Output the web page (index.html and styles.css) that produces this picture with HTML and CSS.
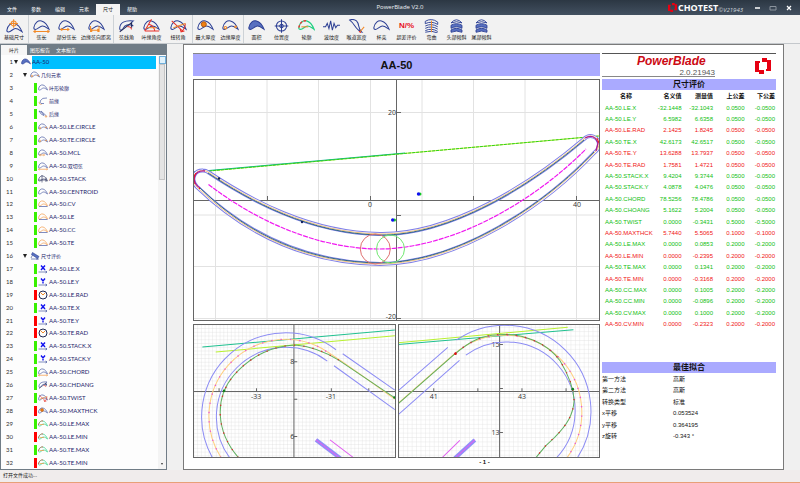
FILE: index.html
```html
<!DOCTYPE html>
<html lang="zh-CN">
<head>
<meta charset="utf-8">
<meta name="viewport" content="width=device-width, initial-scale=1">
<title>PowerBlade V2.0</title>
<link rel="stylesheet" href="styles.css">
</head>
<body>
<svg class="defs" aria-hidden="true">
  <defs>
    <path id="b" d="M1 10C2 4 6 1 10 2C14 3 17 7 19 12C16 10 14 8 11 8C8 8 6 12 3 12C1 12 1 11 1 10Z"/>
    <path id="foil" d="M208 172C250 200 310 233 380 234C450 235 530 185 584 139C590 133 599 137 599 145Q599 149 594 153C545 205 460 263 380 264C310 263 250 238 197 187C190 180 194 170 203 170.500Q206 170.500 208 172Z"/>
    <symbol id="i-blade" viewBox="0 0 20 16"><use href="#b" class="ln"/></symbol>
    <symbol id="i-fill" viewBox="0 0 20 16"><use href="#b" class="ln solid"/></symbol>
    <symbol id="i-base" viewBox="0 0 20 16"><use href="#b" class="ln" transform="translate(0 3)"/><circle cx="9" cy="5" r="3" class="or"/><path d="M9 0V10M4 5H14" class="or"/></symbol>
    <symbol id="i-chord" viewBox="0 0 20 16"><use href="#b" class="ln"/><path d="M1 14.500H19M3 13L1 14.500L3 16M17 13L19 14.500L17 16" class="or"/></symbol>
    <symbol id="i-part" viewBox="0 0 20 16"><use href="#b" class="ln"/><path d="M3 12H13M5 10.500L3 12L5 13.500M11 10.500L13 12L11 13.500" class="or"/></symbol>
    <symbol id="i-dist" viewBox="0 0 20 16"><use href="#b" class="ln"/><path d="M3 8V15M13 8V15M3 13H13M5 11.500L3 13L5 14.500M11 11.500L13 13L11 14.500" class="or"/></symbol>
    <symbol id="i-ang" viewBox="0 0 20 16"><path d="M2 11C2 4 8 1 18 2C14 5 15 6 18 8C12 5 8 7 6 11C4 14 2 13 2 11Z" class="ln"/><path d="M2 15L16 4M16 4V10" class="dk"/><path d="M11 9Q15 8 16 12" class="rd"/></symbol>
    <symbol id="i-edge" viewBox="0 0 20 16"><use href="#b" class="ln"/><path d="M2 14H19M2 14L10 0M7 6Q13 8 14 14" class="rd"/><path d="M5 10H16" class="or"/></symbol>
    <symbol id="i-twist" viewBox="0 0 20 16"><use href="#b" class="ln"/><path d="M2 2L15 14M18 5Q18 11 13 15M12 12L13 15L17 14" class="rd"/><path d="M4 10L18 5" class="or"/></symbol>
    <symbol id="i-max" viewBox="0 0 20 16"><use href="#b" class="ln"/><circle cx="8" cy="6" r="3" fill="#f08010" stroke="#a85010"/></symbol>
    <symbol id="i-thk" viewBox="0 0 20 16"><use href="#b" class="ln"/><circle cx="4" cy="10" r="1.500" class="or"/><circle cx="16" cy="9" r="1" class="or"/></symbol>
    <symbol id="i-pos" viewBox="0 0 20 16"><circle cx="10" cy="8" r="6" class="ln"/><circle cx="10" cy="8" r="2" class="ln"/><path d="M10 0V16M2 8H18" class="ln"/></symbol>
    <symbol id="i-prof" viewBox="0 0 20 16"><use href="#b" fill="none" stroke="#20d080" stroke-width="1.400"/><path d="M1 10C2 4 6 1 10 2" stroke="#f03030" stroke-width="1.600" fill="none" stroke-dasharray="3 2"/><path d="M4 9H12" class="or"/></symbol>
    <symbol id="i-wave" viewBox="0 0 20 16"><path d="M0 9H3L5 5L7 11L9 2L11 13L13 5L15 10L17 7H20" class="ln"/></symbol>
    <symbol id="i-throat" viewBox="0 0 20 16"><path d="M2 1C4 0 7 0 10 2C14 6 11 10 16 15C9 13 8 5 2 1Z" class="ln"/><path d="M14 15L19 9" class="or"/><path d="M13 14L15 16" class="rd"/></symbol>
    <symbol id="i-bend" viewBox="0 0 20 18"><path d="M2 3Q10-2 18 4V7Q10 2 2 6ZM2 9Q10 5 18 10M2 12Q10 8 18 13M2 15Q10 11 18 16M2 17Q10 14 18 18" class="ln"/><path d="M10 2V17" class="or"/></symbol>
    <symbol id="i-tilt" viewBox="0 0 20 18"><path d="M3 5Q10-3 17 5Q10 2 3 5Z" class="ln"/><path d="M3 8Q10 4 17 8V12Q10 8 3 12ZM3 14Q10 10 17 14V17Q10 14 3 17Z" class="ln solid"/></symbol>
    <symbol id="i-front" viewBox="0 0 20 16"><path d="M18 2Q8 1 5 7Q3 11 6 13H12" class="ln"/><path d="M2 10Q2 15 7 15" class="or"/></symbol>
    <symbol id="i-rear" viewBox="0 0 20 16"><path d="M2 2Q9 3 12 11Q6 10 2 2M6 2L17 12" class="ln"/><circle cx="16" cy="13" r="1.500" class="or"/></symbol>
    <symbol id="i-arc" viewBox="0 0 20 16"><use href="#b" class="or"/><path d="M2 13H19" class="ln"/></symbol>
    <symbol id="i-stack" viewBox="0 0 20 16"><use href="#b" class="dk"/><path d="M8 0V15M1 10H17M16 5V14" class="dk"/></symbol>
    <symbol id="i-eval" viewBox="0 0 20 16"><path d="M5 1L18 9L15 13L3 5Z" class="ln solid"/><path d="M2 12L5 6M2 14H18M14 12V16" class="ln"/></symbol>
    <symbol id="i-x" viewBox="0 0 20 16"><path d="M6 1L14 10M14 1L6 10" stroke="#1010f0" stroke-width="2.800"/><path d="M1 14H18M15 12L18 14L15 16" class="ln"/></symbol>
    <symbol id="i-y" viewBox="0 0 20 16"><path d="M6 1L10 6L14 1M10 5V11" fill="none" stroke="#1010f0" stroke-width="2.800"/><path d="M1 14H18M15 12L18 14L15 16" class="ln"/></symbol>
    <symbol id="i-rad" viewBox="0 0 20 18"><circle cx="10" cy="9" r="8" class="dk" style="stroke-width:2"/><path d="M5 4L10 9L14 5" class="or" style="stroke-width:2"/></symbol>
    <symbol id="i-logo" viewBox="0 0 16 16"><path d="M5 3H0V14H4V16H9V12H4V5H5ZM7 0V4H12V11H11V13H16V2H12V0Z" fill="#e60012"/></symbol>
    <pattern id="g1" width="11.200" height="11.200" x="2.800" y="9.800" patternUnits="userSpaceOnUse"><path d="M0 0H11.200M0 0V11.200" class="minor"/></pattern>
    <pattern id="g2" width="13.200" height="13.200" x="10.200" y="2" patternUnits="userSpaceOnUse"><path d="M0 0H13.200M0 0V13.200" class="minor"/></pattern>
  </defs>
</svg>

<header class="titlebar">
  <nav class="menu">
    <button>文件</button><button>参数</button><button>编辑</button><button>元素</button><button class="on">尺寸</button><button>帮助</button>
  </nav>
  <h1>PowerBlade V2.0</h1>
  <div class="brand">
    <svg class="logo"><use href="#i-logo"/></svg><b>CHOTEST</b><i>©V21943</i>
    <button aria-label="最小化"><svg viewBox="0 0 8 8"><path d="M2 4H7" stroke="#fff" stroke-width="1.500"/></svg></button>
    <button aria-label="最大化"><svg viewBox="0 0 8 8"><path d="M1 2.500H7V6H1Z" fill="none" stroke="#8a939c"/></svg></button>
    <button aria-label="关闭"><svg viewBox="0 0 8 8"><path d="M2 2L6 6M6 2L2 6" stroke="#fff" stroke-width="1.200"/></svg></button>
  </div>
</header>

<div class="ribbon">
  <div class="group"><button class="mid"><svg><use href="#i-base"/></svg>基础尺寸</button></div>
  <div class="group">
    <button><svg><use href="#i-chord"/></svg>弦长</button>
    <button><svg><use href="#i-part"/></svg>部分弦长</button>
    <button class="wide"><svg><use href="#i-dist"/></svg>边缘弦向距离</button>
  </div>
  <div class="group">
    <button><svg><use href="#i-ang"/></svg>弦线角</button>
    <button><svg><use href="#i-edge"/></svg>叶缘角度</button>
    <button class="mid"><svg><use href="#i-twist"/></svg>扭转角</button>
  </div>
  <div class="group">
    <button><svg><use href="#i-max"/></svg>最大厚度</button>
    <button><svg><use href="#i-thk"/></svg>边缘厚度</button>
  </div>
  <div class="group">
    <button><svg><use href="#i-fill"/></svg>面积</button>
    <button><svg><use href="#i-pos"/></svg>位置度</button>
    <button><svg><use href="#i-prof"/></svg>轮廓</button>
    <button><svg><use href="#i-wave"/></svg>波纹度</button>
    <button><svg><use href="#i-throat"/></svg>喉道宽度</button>
    <button><svg><use href="#i-blade"/></svg>杯突</button>
    <button><b class="pct">N/%</b>超差评价</button>
    <button><svg><use href="#i-bend"/></svg>弯曲</button>
    <button><svg><use href="#i-tilt"/></svg>头部倾斜</button>
    <button><svg><use href="#i-tilt"/></svg>尾部倾斜</button>
  </div>
</div>

<div class="work">
  <aside class="side">
    <nav class="tabs"><button class="on">叶片</button><button>图形报告</button><button>文本报告</button></nav>
    <div class="body">
      <ol class="tree">
        <li class="l1 sel"><span class="no">1</span><span class="tw"></span><svg><use href="#i-fill"/></svg><span class="tx">AA-50</span></li>
        <li class="l2"><span class="no">2</span><span class="tw"></span><svg><use href="#i-thk"/></svg><span class="tx cj">几何元素</span></li>
        <li><span class="no">3</span><span class="st"></span><svg><use href="#i-blade"/></svg><span class="tx cj">叶形轮廓</span></li>
        <li><span class="no">4</span><span class="st"></span><svg><use href="#i-front"/></svg><span class="tx cj">前缘</span></li>
        <li><span class="no">5</span><span class="st"></span><svg><use href="#i-rear"/></svg><span class="tx cj">后缘</span></li>
        <li><span class="no">6</span><span class="st"></span><svg><use href="#i-thk"/></svg><span class="tx">AA-50.LE.CIRCLE</span></li>
        <li><span class="no">7</span><span class="st"></span><svg><use href="#i-thk"/></svg><span class="tx">AA-50.TE.CIRCLE</span></li>
        <li><span class="no">8</span><span class="st"></span><svg><use href="#i-part"/></svg><span class="tx">AA-50.MCL</span></li>
        <li><span class="no">9</span><span class="st"></span><svg><use href="#i-chord"/></svg><span class="tx">AA-50.<span class="cj">双切弦</span></span></li>
        <li><span class="no">10</span><span class="st"></span><svg><use href="#i-stack"/></svg><span class="tx">AA-50.STACK</span></li>
        <li><span class="no">11</span><span class="st"></span><svg><use href="#i-blade"/></svg><span class="tx">AA-50.CENTROID</span></li>
        <li><span class="no">12</span><span class="st"></span><svg><use href="#i-arc"/></svg><span class="tx">AA-50.CV</span></li>
        <li><span class="no">13</span><span class="st"></span><svg><use href="#i-arc"/></svg><span class="tx">AA-50.LE</span></li>
        <li><span class="no">14</span><span class="st"></span><svg><use href="#i-arc"/></svg><span class="tx">AA-50.CC</span></li>
        <li><span class="no">15</span><span class="st"></span><svg><use href="#i-arc"/></svg><span class="tx">AA-50.TE</span></li>
        <li class="l2"><span class="no">16</span><span class="tw"></span><svg><use href="#i-eval"/></svg><span class="tx cj">尺寸评价</span></li>
        <li><span class="no">17</span><span class="st"></span><svg><use href="#i-x"/></svg><span class="tx">AA-50.LE.X</span></li>
        <li><span class="no">18</span><span class="st"></span><svg><use href="#i-y"/></svg><span class="tx">AA-50.LE.Y</span></li>
        <li class="bad"><span class="no">19</span><span class="st"></span><svg><use href="#i-rad"/></svg><span class="tx">AA-50.LE.RAD</span></li>
        <li><span class="no">20</span><span class="st"></span><svg><use href="#i-x"/></svg><span class="tx">AA-50.TE.X</span></li>
        <li class="bad"><span class="no">21</span><span class="st"></span><svg><use href="#i-y"/></svg><span class="tx">AA-50.TE.Y</span></li>
        <li class="bad"><span class="no">22</span><span class="st"></span><svg><use href="#i-rad"/></svg><span class="tx">AA-50.TE.RAD</span></li>
        <li><span class="no">23</span><span class="st"></span><svg><use href="#i-x"/></svg><span class="tx">AA-50.STACK.X</span></li>
        <li><span class="no">24</span><span class="st"></span><svg><use href="#i-y"/></svg><span class="tx">AA-50.STACK.Y</span></li>
        <li><span class="no">25</span><span class="st"></span><svg><use href="#i-chord"/></svg><span class="tx">AA-50.CHORD</span></li>
        <li><span class="no">26</span><span class="st"></span><svg><use href="#i-ang"/></svg><span class="tx">AA-50.CHDANG</span></li>
        <li><span class="no">27</span><span class="st"></span><svg><use href="#i-twist"/></svg><span class="tx">AA-50.TWIST</span></li>
        <li class="bad"><span class="no">28</span><span class="st"></span><svg><use href="#i-max"/></svg><span class="tx">AA-50.MAXTHCK</span></li>
        <li><span class="no">29</span><span class="st"></span><svg><use href="#i-prof"/></svg><span class="tx">AA-50.LE.MAX</span></li>
        <li class="bad"><span class="no">30</span><span class="st"></span><svg><use href="#i-prof"/></svg><span class="tx">AA-50.LE.MIN</span></li>
        <li><span class="no">31</span><span class="st"></span><svg><use href="#i-prof"/></svg><span class="tx">AA-50.TE.MAX</span></li>
        <li class="bad"><span class="no">32</span><span class="st"></span><svg><use href="#i-prof"/></svg><span class="tx">AA-50.TE.MIN</span></li>
      </ol>
      <div class="scroll"><span class="up"></span><span class="thumb"></span><span class="down"></span></div>
    </div>
  </aside>

  <main class="page">
    <section class="plots">
      <h2>AA-50</h2>
      <svg class="chart" viewBox="193 79 407 242">
        <path class="major" d="M215.500 79V321M267 79V321M318.500 79V321M370.500 79V321M422 79V321M473.500 79V321M525 79V321M576.500 79V321M193 112.500H600M193 163.500H600M193 215H600M193 266.500H600M193 318.500H600"/>
        <path class="axis" d="M193 200.500H600M396.500 79V321M267.500 196V200M370.500 196V200M473.500 196V200M576.500 196V200M397 112.500H401M397 215.500H401M397 318.500H401"/>
        <g class="tick"><text x="396" y="115" text-anchor="end">20</text><text x="396" y="319" text-anchor="end">-20</text><text x="370" y="207" text-anchor="middle">0</text><text x="577" y="207" text-anchor="middle">40</text></g>
        <path d="M193 172L209 171L599 136" stroke="#c8f030" fill="none"/>
        <path d="M193 172L209 170.500L405 153" stroke="#10b890" fill="none"/>
        <path d="M209 171L599 136" stroke="#30d020" fill="none" stroke-dasharray="3 1"/>
        <use href="#foil" class="f-out"/>
        <use href="#foil" class="f-gap"/>
        <use href="#foil" class="f-nom"/>
        <path d="M208 173C250 201 310 234 380 235C450 236 530 186 584 140M594 152C545 204 460 262 380 263C310 262 250 237 199 187" fill="none" stroke="#225f78" stroke-width="0.900"/>
        <path d="M200 188C190 181 194 170 205 171M585 138Q594 133 598 143L596 151" fill="none" stroke="#b01890" stroke-width="1.300"/>
        <path d="M194 184Q193 176 196 173M597 138L599 143M199 188L200 189" fill="none" stroke="#f01818"/>
        <path d="M208.500 184.500C255 220 315 248 378 249C450 249 530 205 586 149" fill="none" stroke="#f018f0" stroke-width="1.200" stroke-dasharray="5 1"/>
        <circle cx="375.300" cy="249" r="15" fill="none" stroke="#e07070"/>
        <circle cx="390.500" cy="249" r="14" fill="none" stroke="#70e870"/>
        <g fill="#10d020"><circle cx="420" cy="194" r="1.500"/><circle cx="394.500" cy="220" r="1.500"/></g>
        <g fill="#1010f0"><circle cx="418.500" cy="194" r="1.700"/><circle cx="392.700" cy="220" r="1.700"/></g>
        <g fill="#102060"><circle cx="302" cy="222" r="1.200"/><circle cx="219" cy="178.500" r="1.200"/></g>
      </svg>
      <div class="pair">
        <svg class="chart zoomed" viewBox="24 20 606 402">
          <rect x="24" y="20" width="606" height="402" fill="url(#g1)"/>
          <path class="axis" d="M24 222H630M326 20V422M102 212V222M214 212V222M438 212V222M550 212V222M326 133H336M326 245H336M326 357H336"/>
          <g class="tick"><text x="327" y="141" text-anchor="end">8</text><text x="327" y="365" text-anchor="end">6</text><text x="213" y="243" text-anchor="middle">-33</text><text x="437" y="243" text-anchor="middle">-31</text></g>
          <path d="M52 89L628 38" class="teal"/><path d="M92 104L628 55" class="lime"/>
          <path d="M83 422A251 251 0 0 1 452 97M135 422A208 208 0 0 1 426 131M472 109L628 218M446 145L628 276" class="tol"/>
          <path d="M108 420A230 230 0 0 1 400 88Q440 108 628 245" class="nom"/>
          <path d="M108 420A230 230 0 0 1 400 88L440 112" class="dots"/>
          <path d="M160 420C90 340 90 240 145 175C200 110 270 85 330 83C390 88 430 110 460 128L628 241" class="mea"/>
          <path d="M160 420C90 340 90 240 145 175C200 110 270 85 330 83C390 88 430 110 460 128" class="dots red"/>
          <circle cx="117" cy="220" r="4" fill="#108020"/><circle cx="627" cy="240" r="4" fill="#108020"/>
          <path d="M392 367L465 422" class="band"/><path d="M392 367L465 422M434 367L507 422" class="mag"/>
        </svg>
        <svg class="chart zoomed" viewBox="22 20 606 402">
          <rect x="22" y="20" width="606" height="402" fill="url(#g2)"/>
          <path class="axis" d="M22 222H628M326 20V422M129 212V222M261 212V222M393 212V222M525 212V222M326 81H336M326 213H336M326 345H336"/>
          <g class="tick"><text x="326" y="89" text-anchor="end">15</text><text x="326" y="353" text-anchor="end">13</text><text x="129" y="243" text-anchor="middle">41</text><text x="393" y="243" text-anchor="middle">43</text></g>
          <path d="M22 81L547 37" class="teal"/><path d="M22 76L530 30" class="lime"/>
          <path d="M197 68A258 258 0 0 1 558 422M225 113A206 206 0 0 1 495 422M22 220L171 90M22 292L206 129" class="tol"/>
          <path d="M22 258L193 107A231 231 0 0 1 528 420" class="nom"/>
          <path d="M193 107A231 231 0 0 1 528 420" class="dots"/>
          <path d="M22 259L193 109C240 70 270 55 320 52C400 45 470 80 507 130C540 185 548 220 549 250C546 290 530 320 490 360C460 385 450 400 435 420" class="mea"/>
          <path d="M193 109C240 70 270 55 320 52C400 45 470 80 507 130C540 185 548 220 549 250C546 290 530 320 490 360C460 385 450 400 435 420" class="dots red"/>
          <circle cx="194" cy="109" r="4" fill="#e01010"/><circle cx="545" cy="215" r="4" fill="#108020"/>
          <path d="M192 422L252 367" class="band"/><path d="M192 422L252 367M152 422L207 368" class="mag"/>
        </svg>
      </div>
    </section>

    <section class="report">
      <div class="head">
        <div class="name"><em>PowerBlade</em><span>2.0.21943</span></div>
        <svg><use href="#i-logo"/></svg>
      </div>
      <h3>尺寸评价</h3>
      <table class="dims">
        <thead><tr><th>名称</th><th>名义值</th><th>测量值</th><th>上公差</th><th>下公差</th></tr></thead>
        <tbody>
          <tr><td>AA-50.LE.X</td><td>-32.1448</td><td>-32.1043</td><td>0.0500</td><td>-0.0500</td></tr>
          <tr><td>AA-50.LE.Y</td><td>6.5982</td><td>6.6358</td><td>0.0500</td><td>-0.0500</td></tr>
          <tr class="bad"><td>AA-50.LE.RAD</td><td>2.1425</td><td>1.8245</td><td>0.0500</td><td>-0.0500</td></tr>
          <tr><td>AA-50.TE.X</td><td>42.6173</td><td>42.6517</td><td>0.0500</td><td>-0.0500</td></tr>
          <tr class="bad"><td>AA-50.TE.Y</td><td>13.6288</td><td>13.7937</td><td>0.0500</td><td>-0.0500</td></tr>
          <tr class="bad"><td>AA-50.TE.RAD</td><td>1.7581</td><td>1.4721</td><td>0.0500</td><td>-0.0500</td></tr>
          <tr><td>AA-50.STACK.X</td><td>9.4204</td><td>9.3744</td><td>0.0500</td><td>-0.0500</td></tr>
          <tr><td>AA-50.STACK.Y</td><td>4.0878</td><td>4.0476</td><td>0.0500</td><td>-0.0500</td></tr>
          <tr><td>AA-50.CHORD</td><td>78.5256</td><td>78.4786</td><td>0.0500</td><td>-0.0500</td></tr>
          <tr><td>AA-50.CHOANG</td><td>5.1622</td><td>5.2004</td><td>0.0500</td><td>-0.0500</td></tr>
          <tr><td>AA-50.TWIST</td><td>0.0000</td><td>-0.3431</td><td>0.5000</td><td>-0.5000</td></tr>
          <tr class="bad"><td>AA-50.MAXTHCK</td><td>5.7440</td><td>5.5065</td><td>0.1000</td><td>-0.1000</td></tr>
          <tr><td>AA-50.LE.MAX</td><td>0.0000</td><td>0.0853</td><td>0.2000</td><td>-0.2000</td></tr>
          <tr class="bad"><td>AA-50.LE.MIN</td><td>0.0000</td><td>-0.2395</td><td>0.2000</td><td>-0.2000</td></tr>
          <tr><td>AA-50.TE.MAX</td><td>0.0000</td><td>0.1341</td><td>0.2000</td><td>-0.2000</td></tr>
          <tr class="bad"><td>AA-50.TE.MIN</td><td>0.0000</td><td>-0.3168</td><td>0.2000</td><td>-0.2000</td></tr>
          <tr><td>AA-50.CC.MAX</td><td>0.0000</td><td>0.1005</td><td>0.2000</td><td>-0.2000</td></tr>
          <tr><td>AA-50.CC.MIN</td><td>0.0000</td><td>-0.0896</td><td>0.2000</td><td>-0.2000</td></tr>
          <tr><td>AA-50.CV.MAX</td><td>0.0000</td><td>0.1000</td><td>0.2000</td><td>-0.2000</td></tr>
          <tr class="bad"><td>AA-50.CV.MIN</td><td>0.0000</td><td>-0.2323</td><td>0.2000</td><td>-0.2000</td></tr>
        </tbody>
      </table>
      <h3>最佳拟合</h3>
      <table class="fit">
        <tbody>
          <tr><th>第一方法</th><td>高斯</td></tr>
          <tr><th>第二方法</th><td>高斯</td></tr>
          <tr><th>转换类型</th><td>标准</td></tr>
          <tr><th>x平移</th><td>0.053524</td></tr>
          <tr><th>y平移</th><td>0.364195</td></tr>
          <tr><th>z旋转</th><td>-0.343 °</td></tr>
        </tbody>
      </table>
    </section>
    <footer>- 1 -</footer>
  </main>
</div>
<footer class="status">打开文件成功...</footer>
</body>
</html>
```
FILE: styles.css
```css
* { box-sizing: border-box; }
body {
  margin: 0;
  min-height: 100vh;
  display: flex;
  flex-direction: column;
  background: #f0f0f0;
  color: #222;
  font: 5px/8px "Open Sans", "Noto Sans CJK SC", sans-serif;
}
button { border: 0; padding: 0; background: none; color: inherit; font: inherit; }
h1, h2, h3, ol { margin: 0; padding: 0; }
svg { display: block; }
.defs { position: absolute; width: 0; height: 0; }
.ln, .or, .rd, .dk { fill: none; stroke-width: 1.2; }
.ln { stroke: #2c3f94; }
.or { stroke: #f28a28; }
.rd { stroke: #e83028; }
.dk { stroke: #222a55; }
.solid { fill: #5870c0; }

.titlebar {
  height: 15px;
  display: grid;
  grid-template-columns: 1fr auto 1fr;
  background: linear-gradient(#2c3743, #425060);
  color: #fff;
}
.menu { display: flex; padding-top: 4px; }
.menu button { width: 24px; line-height: 11px; }
.menu .on { background: #f4f4f4; color: #222; }
.titlebar h1 { font-size: 6px; font-weight: 400; line-height: 15px; color: #eef0f3; }
.brand { display: flex; align-items: center; justify-content: flex-end; padding-right: 3px; }
.brand .logo { width: 9px; height: 9px; margin-right: 1px; }
.brand b { font-size: 9px; line-height: 15px; }
.brand i { font-size: 6px; color: #cfd5dc; padding: 5px 6px 0 0; }
.brand button { width: 16px; }
.brand button svg { width: 8px; height: 8px; margin: 0 auto; }

.ribbon { height: 29px; display: flex; border-bottom: 1px solid #c4c8cc; background: #f2f2f2; }
.group { display: flex; border-right: 1px solid #cdd2d6; }
.group:last-child { border-right: 0; }
.ribbon button { width: 25px; padding-top: 1px; text-align: center; white-space: nowrap; color: #111; }
.ribbon .mid { width: 28px; }
.ribbon .wide { width: 34px; }
.ribbon svg { width: 17px; height: 14px; margin: 0 auto; }
.pct { display: block; font: bold 8px/14px "Liberation Sans", sans-serif; color: #e8101c; }

.work { flex: 1; display: grid; grid-template-columns: 167px 1fr; }
.side { display: flex; flex-direction: column; background: #707c86; border: solid #707c86; border-width: 0 1px 1px; }
.tabs { display: flex; padding-top: 1px; color: #fff; }
.tabs button { width: 26px; line-height: 10px; }
.tabs .on { background: #f6f6f6; color: #222; }
.side .body { flex: 1; display: flex; background: #fdfdfd; padding-top: 1px; }
.tree {
  flex: 1;
  list-style: none;
  display: grid;
  grid-auto-rows: 1fr;
  font-family: Lato, "Noto Sans CJK SC", sans-serif;
  font-size: 6px;
  color: #1c1c6a;
  padding-right: 2px;
}
.cj { font-size: 5px; }
.tree li { display: flex; align-items: center; padding-left: 3px; white-space: nowrap; }
.tree svg { width: 10px; height: 10px; margin-right: 1px; }
.no { width: 9px; margin-right: 21px; text-align: right; color: #333; }
.st { width: 3px; height: 10px; margin-right: 1px; background: #38f000; }
.bad .st { background: #f00; }
.l1 .no { margin-right: 1px; }
.l2 .no { margin-right: 10px; }
.tw { border: solid transparent; border-width: 4px 2px 0; border-top-color: #222; margin-right: 3px; }
.sel .tx { flex: 1; align-self: stretch; display: flex; align-items: center; background: #00bfff; }
.scroll { width: 8px; display: flex; flex-direction: column; align-items: center; background: #f4f4f4; }
.up { width: 7px; height: 8px; border: 1px solid #70b0dc; background: #e0f2fc; }
.thumb { width: 6px; height: 116px; background: #e4e4e4; border: 1px solid #c4c4c4; }
.down { margin-top: auto; margin-bottom: 4px; border: solid transparent; border-width: 2px 1px 0; border-top-color: #333; }

.page {
  margin: 0 16px;
  padding: 8px 7px 0 9px;
  border: 1px solid #7a7a7a;
  background: #fff;
  display: grid;
  grid-template-columns: 407fr 174fr;
  grid-template-rows: auto 1fr;
  column-gap: 2px;
  font-family: "Liberation Sans", "Noto Sans CJK SC", sans-serif;
  color: #111;
}
.page > footer { grid-column: 1 / -1; text-align: center; font-size: 6px; font-weight: bold; }
.plots h2 {
  border-top: 1px solid #888;
  background: #aaf;
  font-size: 11px;
  line-height: 22px;
  text-align: center;
  margin-bottom: 3px;
}
.chart { width: 100%; background: #fff; outline: 1px solid #666; outline-offset: -1px; }
.pair { display: grid; grid-template-columns: 1fr 1fr; gap: 2px; margin-top: 3px; }
.major { stroke: #e2e2e2; }
.minor { stroke: #dcdcdc; stroke-width: 2; }
.axis { fill: none; stroke: #666; }
.tick { font: 7px "Open Sans", sans-serif; fill: #333; }
.f-out, .f-gap, .f-nom { fill: none; }
.f-out { stroke: #8080e8; stroke-width: 4; }
.f-gap { stroke: #fff; stroke-width: 2; }
.f-nom { stroke: #f0c080; stroke-width: 1; }
.zoomed .axis { stroke-width: 3; }
.zoomed .tick { font-size: 21px; }
.zoomed path { fill: none; }
.teal, .lime, .tol, .nom, .mea, .mag { stroke-width: 3; }
.teal { stroke: #20c090; }
.lime { stroke: #b8f030; }
.tol { stroke: #8c8cf4; }
.nom { stroke: #ffcf80; }
.mea { stroke: #60b060; }
.mag { stroke: #e060f0; }
.band { stroke: #9090f8; stroke-width: 12; }
.dots { stroke: #e858d8; stroke-width: 4; stroke-dasharray: 4 24; }
.dots.red { stroke: #d83030; }

.report .head { display: flex; justify-content: space-between; border-top: 1px solid #555; height: 26px; padding: 0 5px 2px 0; }
.name { width: 113px; padding-left: 35px; border-bottom: 1px solid #888; display: flex; flex-direction: column; }
.name em { font-size: 12px; font-weight: bold; line-height: 15px; color: #cc0a14; }
.name span { font-size: 8px; line-height: 8px; text-align: right; color: #555; }
.head svg { width: 16px; height: 16px; margin-top: 4px; }
.report h3 { background: #aaf; font-size: 8px; line-height: 11px; text-align: center; }
.report table { width: 100%; border-collapse: collapse; font-size: 6px; line-height: 8px; table-layout: fixed; }
.report td, .report th { padding: 0; }
.dims { height: 240px; margin-bottom: 32px; color: #10c010; }
.dims thead { color: #111; }
.dims td, .dims th { text-align: right; }
.dims thead th { height: 12px; }
.dims td:last-child, .dims th:last-child { padding-right: 1px; }
.dims th:first-child { width: 48px; text-align: center; }
.dims td:first-child { padding-left: 3px; text-align: left; white-space: nowrap; }
.dims .bad { color: #f01414; }
.fit { height: 69px; }
.fit th { width: 71px; font-weight: normal; text-align: left; }

.status { height: 13px; padding-left: 3px; line-height: 10px; background: #f0ecec; border-bottom: 1px solid #e8a078; }
```
